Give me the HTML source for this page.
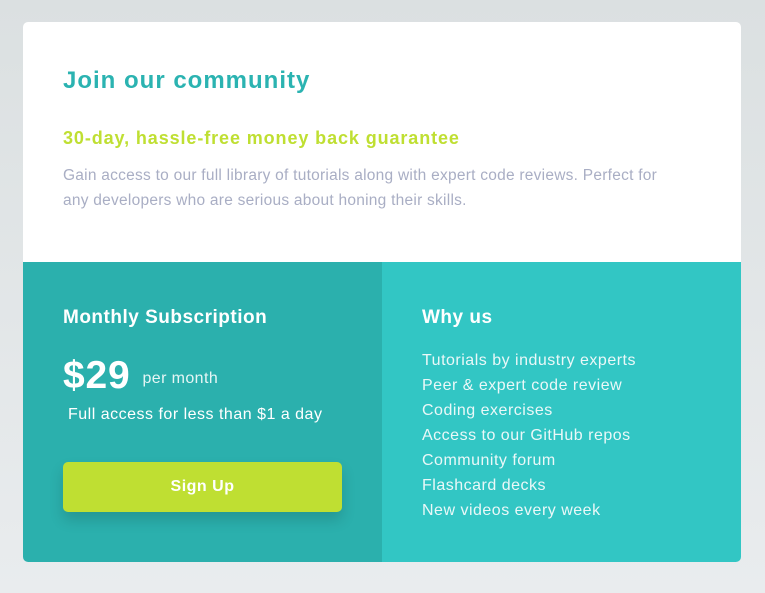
<!DOCTYPE html>
<html><head><meta charset="utf-8"><style>
*{margin:0;padding:0;box-sizing:border-box}
body{width:765px;height:593px;background:linear-gradient(#dbe0e1,#e9ecee);font-family:"Liberation Sans",sans-serif;position:relative;overflow:hidden}
.card{position:absolute;left:23px;top:22px;width:718px;height:540px;border-radius:5px;overflow:hidden;background:#fff}
.top{height:240px;padding:45px 40px 0 40px}
h1{color:#2bb3b1;font-size:24px;font-weight:bold;letter-spacing:1px}
h2{color:#bfdf32;font-size:18px;font-weight:bold;margin-top:33px;letter-spacing:0.9px}
.top p{color:#a9aec4;font-size:15.5px;line-height:25px;margin-top:14px;letter-spacing:0.25px;max-width:622px}
.bot{display:flex;height:300px}
.l{width:359px;background:#2bb0ad;padding:45px 40px 0 40px;color:#fff}
.r{flex:1;background:#32c6c4;padding:45px 40px 0 40px;color:#fff}
h3{font-size:19px;font-weight:bold;letter-spacing:0.5px}
.price{margin-top:25px;display:flex;align-items:center}
.price b{font-size:39px;font-weight:bold;letter-spacing:0.8px}
.price span{font-size:16px;margin-left:12px;color:#e5f6f5;margin-top:6px;letter-spacing:0.4px}
.full{font-size:16px;margin-top:8px;margin-left:5px;letter-spacing:0.5px}
.btn{margin-top:38px;width:279px;height:50px;background:#bfdf32;border-radius:5px;box-shadow:0 8px 14px rgba(0,0,0,0.15);text-align:center;line-height:50px;font-weight:bold;font-size:16px;letter-spacing:0.5px}
ul{list-style:none;margin-top:19px;font-size:16px;line-height:25px;color:#eaf8f8;letter-spacing:0.5px}
</style></head><body>
<div class="card">
<div class="top">
<h1>Join our community</h1>
<h2>30-day, hassle-free money back guarantee</h2>
<p>Gain access to our full library of tutorials along with expert code reviews. Perfect for any developers who are serious about honing their skills.</p>
</div>
<div class="bot">
<div class="l">
<h3>Monthly Subscription</h3>
<div class="price"><b>$29</b><span>per month</span></div>
<div class="full">Full access for less than $1 a day</div>
<div class="btn">Sign Up</div>
</div>
<div class="r">
<h3>Why us</h3>
<ul><li>Tutorials by industry experts</li><li>Peer &amp; expert code review</li><li>Coding exercises</li><li>Access to our GitHub repos</li><li>Community forum</li><li>Flashcard decks</li><li>New videos every week</li></ul>
</div>
</div>
</div>
</body></html>
